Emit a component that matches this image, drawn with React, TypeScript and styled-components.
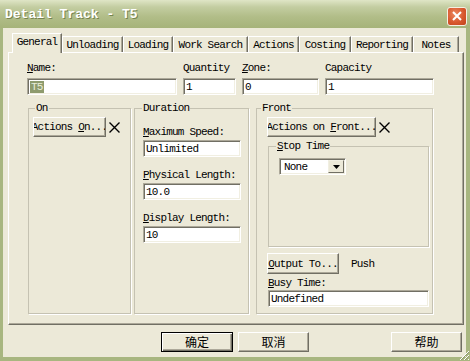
import React from 'react';
import styled, { createGlobalStyle } from 'styled-components';

const mono = `'Liberation Mono', 'DejaVu Sans Mono', monospace`;
const cjk = `'Noto Sans CJK SC', 'Noto Sans', sans-serif`;

const GlobalStyle = createGlobalStyle`
	html, body {
		margin: 0;
		padding: 0;
		background: #fff;
	}
	body {
		font-family: ${mono};
	}
`;

const Window = styled.div`
	position: relative;
	width: 470px;
	height: 361px;
	display: flex;
	flex-direction: column;
	background: #ece9d8;
	overflow: hidden;
`;

const TitleBar = styled.div`
	flex: none;
	height: 28px;
	box-sizing: border-box;
	display: flex;
	align-items: center;
	justify-content: space-between;
	padding: 2px 3px 0 5px;
	background: linear-gradient(#dfe5c6 0%, #c3cda1 25%, #b1bd88 60%, #a6b37a 100%);
`;

const TitleText = styled.span`
	font: bold 13px/14px ${mono};
	color: #fff;
	text-shadow: 1px 1px 0 #76834f;
	white-space: nowrap;
`;

const CloseButton = styled.div`
	width: 20px;
	height: 19px;
	box-sizing: border-box;
	margin-top: 2px;
	display: flex;
	align-items: center;
	justify-content: center;
	border: 1px solid #f4efe3;
	border-radius: 3px;
	background: radial-gradient(circle at 40% 35%, #ec8a62 0%, #d8582e 55%, #c2431b 100%);
`;

const Frame = styled.div`
	flex: 1;
	display: flex;
	flex-direction: column;
	border-style: solid;
	border-color: #a8b680;
	border-width: 0 4px 4px 3px;
`;

const TabStrip = styled.div`
	flex: none;
	height: 24px;
	box-sizing: border-box;
	display: flex;
	align-items: flex-end;
	padding-left: 9px;
`;

const Tab = styled.div<{ $w: number; $active?: boolean }>`
	position: relative;
	z-index: ${(p) => (p.$active ? 1 : 0)};
	box-sizing: border-box;
	width: ${(p) => p.$w}px;
	height: ${(p) => (p.$active ? 20 : 16)}px;
	margin-bottom: ${(p) => (p.$active ? -1 : 0)}px;
	padding-bottom: ${(p) => (p.$active ? 3 : 0)}px;
	display: flex;
	align-items: center;
	justify-content: center;
	font: 11px/12px ${mono};
	letter-spacing: -0.8px;
	color: #000;
	white-space: nowrap;
	background: #ece9d8;
	border-top: 1px solid #fff;
	border-left: 1px solid #fff;
	border-right: 1px solid #716f64;
	box-shadow: inset -1px 0 #aca899;
`;

const TabPage = styled.div`
	flex: none;
	height: 273px;
	box-sizing: border-box;
	margin: 0 2px 0 5px;
	padding: 9px 0 0 18px;
	display: flex;
	flex-direction: column;
	border: 1px solid;
	border-color: #fff #716f64 #716f64 #fff;
	box-shadow: inset -1px -1px #aca899;
`;

const FieldRow = styled.div`
	display: grid;
	grid-template-columns: 150px 53px 77px 109px;
	column-gap: 6px;
`;

const Label = styled.div<{ $gap: number }>`
	height: 12px;
	margin-bottom: ${(p) => p.$gap}px;
	font: 11px/12px ${mono};
	letter-spacing: -0.8px;
	color: #000;
	white-space: nowrap;
	overflow: hidden;
`;

const TextBox = styled.div<{ $w?: number }>`
	width: ${(p) => (p.$w ? `${p.$w}px` : 'auto')};
	height: 17px;
	box-sizing: border-box;
	display: flex;
	align-items: center;
	padding-left: 2px;
	background: #fff;
	border: 1px solid;
	border-color: #aca899 #fff #fff #aca899;
	box-shadow: inset 1px 1px #716f64, inset -1px -1px #f1efe2;
	font: 11px/12px ${mono};
	letter-spacing: -0.8px;
	color: #000;
	white-space: nowrap;
	overflow: hidden;
`;

const Selection = styled.span`
	background: #8e9b6e;
	color: #e9edd9;
	padding: 0 1px;
`;

const GroupRow = styled.div`
	display: flex;
	margin-top: 7px;
	margin-left: 1px;
`;

const Group = styled.fieldset<{ $w: number; $h: number; $ml?: number; $mt?: number }>`
	width: ${(p) => p.$w}px;
	height: ${(p) => p.$h}px;
	box-sizing: border-box;
	margin: ${(p) => p.$mt ?? 0}px 0 0 ${(p) => p.$ml ?? 0}px;
	padding: 0;
	min-width: 0;
	border: 1px solid #c5c2b2;
	box-shadow: 1px 1px 0 #fff;
`;

const GroupTitle = styled.legend<{ $indent: number }>`
	margin-left: ${(p) => p.$indent}px;
	padding: 0 1px;
	font: 11px/12px ${mono};
	letter-spacing: -0.8px;
	color: #000;
`;

const GroupBody = styled.div<{ $pt: number; $pl: number }>`
	display: flex;
	flex-direction: column;
	align-items: flex-start;
	padding: ${(p) => p.$pt}px 0 0 ${(p) => p.$pl}px;
`;

const Stack = styled.div`
	display: flex;
	flex-direction: column;
	margin-top: 12px;
`;

const ButtonLine = styled.div<{ $mt?: number }>`
	display: flex;
	align-items: center;
	gap: 2px;
	margin-top: ${(p) => p.$mt ?? 0}px;
`;

const PushButton = styled.div<{ $w: number; $h?: number }>`
	width: ${(p) => p.$w}px;
	height: ${(p) => p.$h ?? 20}px;
	box-sizing: border-box;
	flex: none;
	display: flex;
	align-items: center;
	justify-content: center;
	overflow: hidden;
	white-space: nowrap;
	background: #ece9d8;
	border: 1px solid;
	border-color: #fff #716f64 #716f64 #fff;
	box-shadow: inset -1px -1px #aca899;
	font: 11px/12px ${mono};
	letter-spacing: -0.8px;
	color: #000;
`;

const PlainText = styled.span`
	font: 11px/12px ${mono};
	letter-spacing: -0.8px;
	color: #000;
`;

const DropDown = styled(TextBox)`
	padding: 0 1px 0 4px;
	justify-content: space-between;
`;

const DropButton = styled.div`
	width: 16px;
	height: 13px;
	box-sizing: border-box;
	display: flex;
	align-items: center;
	justify-content: center;
	background: #ece9d8;
	border: 1px solid;
	border-color: #f1efe2 #716f64 #716f64 #f1efe2;
`;

const Footer = styled.div`
	flex: 1;
	display: flex;
	align-items: flex-start;
	gap: 5px;
	padding: 7px 4px 0 158px;
`;

const FooterButton = styled.div<{ $w: number; $default?: boolean; $push?: boolean }>`
	width: ${(p) => p.$w}px;
	height: 20px;
	box-sizing: border-box;
	margin-left: ${(p) => (p.$push ? 'auto' : '0')};
	display: flex;
	align-items: center;
	justify-content: center;
	background: #ece9d8;
	border: 1px solid;
	border-color: ${(p) => (p.$default ? '#000' : '#fff #716f64 #716f64 #fff')};
	box-shadow: ${(p) =>
		p.$default
			? 'inset 1px 1px #fff, inset -1px -1px #716f64, inset -2px -2px #aca899'
			: 'inset -1px -1px #aca899'};
	font: 12px/14px ${cjk};
	color: #000;
`;

const Grip = styled.svg`
	position: absolute;
	right: 0;
	bottom: 0;
`;

const ClearMark = () => (
	<svg width="13" height="11" viewBox="0 0 13 11">
		<path d="M1.5 0.5 L11.5 10.5 M11.5 0.5 L1.5 10.5" stroke="#000" strokeWidth="1.4" fill="none" />
	</svg>
);

const tabs: [string, number][] = [
	['General', 50],
	['Unloading', 61],
	['Loading', 50],
	['Work Search', 75],
	['Actions', 51],
	['Costing', 52],
	['Reporting', 62],
	['Notes', 46],
];

export default function App() {
	return (
		<Window>
			<GlobalStyle />
			<TitleBar>
				<TitleText>Detail Track - T5</TitleText>
				<CloseButton>
					<svg width="10" height="10" viewBox="0 0 10 10">
						<path d="M1 1 L9 9 M9 1 L1 9" stroke="#fff" strokeWidth="2" fill="none" />
					</svg>
				</CloseButton>
			</TitleBar>
			<Frame>
				<TabStrip>
					{tabs.map(([name, w], i) => (
						<Tab key={name} $w={w} $active={i === 0}>
							{name}
						</Tab>
					))}
				</TabStrip>
				<TabPage>
					<FieldRow>
						<div>
							<Label $gap={4}>
								<u>N</u>ame:
							</Label>
							<TextBox>
								<Selection>T5</Selection>
							</TextBox>
						</div>
						<div>
							<Label $gap={4}>Quantity</Label>
							<TextBox>1</TextBox>
						</div>
						<div>
							<Label $gap={4}>
								<u>Z</u>one:
							</Label>
							<TextBox>0</TextBox>
						</div>
						<div>
							<Label $gap={4}>Capacity</Label>
							<TextBox>1</TextBox>
						</div>
					</FieldRow>
					<GroupRow>
						<Group $w={103} $h={212}>
							<GroupTitle $indent={6}>On</GroupTitle>
							<GroupBody $pt={3} $pl={4}>
								<ButtonLine>
									<PushButton $w={73}>
										Actions&nbsp;<u>O</u>n...
									</PushButton>
									<ClearMark />
								</ButtonLine>
							</GroupBody>
						</Group>
						<Group $w={115} $h={212} $ml={3}>
							<GroupTitle $indent={7}>Duration</GroupTitle>
							<GroupBody $pt={0} $pl={8}>
								<Stack>
									<Label $gap={2}>
										<u>M</u>aximum Speed:
									</Label>
									<TextBox $w={98}>Unlimited</TextBox>
								</Stack>
								<Stack>
									<Label $gap={2}>
										<u>P</u>hysical Length:
									</Label>
									<TextBox $w={98}>10.0</TextBox>
								</Stack>
								<Stack>
									<Label $gap={2}>
										<u>D</u>isplay Length:
									</Label>
									<TextBox $w={98}>10</TextBox>
								</Stack>
							</GroupBody>
						</Group>
						<Group $w={177} $h={212} $ml={7}>
							<GroupTitle $indent={4}>Front</GroupTitle>
							<GroupBody $pt={3} $pl={10}>
								<ButtonLine>
									<PushButton $w={109}>
										Actions on&nbsp;<u>F</u>ront...
									</PushButton>
									<ClearMark />
								</ButtonLine>
								<Group $w={161} $h={107} $ml={1} $mt={3}>
									<GroupTitle $indent={7}>
										<u>S</u>top Time
									</GroupTitle>
									<GroupBody $pt={6} $pl={10}>
										<DropDown $w={67}>
											None
											<DropButton>
												<svg width="7" height="4" viewBox="0 0 7 4">
													<path d="M0 0 H7 L3.5 4 Z" fill="#000" />
												</svg>
											</DropButton>
										</DropDown>
									</GroupBody>
								</Group>
								<ButtonLine $mt={6}>
									<PushButton $w={72} $h={21}>
										<u>O</u>utput To...
									</PushButton>
									<PlainText style={{ marginLeft: 10 }}>Push</PlainText>
								</ButtonLine>
								<Stack style={{ marginTop: 3, marginLeft: 1 }}>
									<Label $gap={1}>
										<u>B</u>usy Time:
									</Label>
									<TextBox $w={161}>Undefined</TextBox>
								</Stack>
							</GroupBody>
						</Group>
					</GroupRow>
				</TabPage>
				<Footer>
					<FooterButton $w={72} $default>
						确定
					</FooterButton>
					<FooterButton $w={71}>取消</FooterButton>
					<FooterButton $w={71} $push>
						帮助
					</FooterButton>
				</Footer>
			</Frame>
			<Grip width="12" height="12" viewBox="0 0 12 12">
				<path d="M11 2 L2 11 M11 6 L6 11 M11 10 L10 11" stroke="#fff" strokeWidth="1" />
				<path d="M11 3 L3 11 M11 7 L7 11" stroke="#8f9a6e" strokeWidth="1" />
			</Grip>
		</Window>
	);
}
